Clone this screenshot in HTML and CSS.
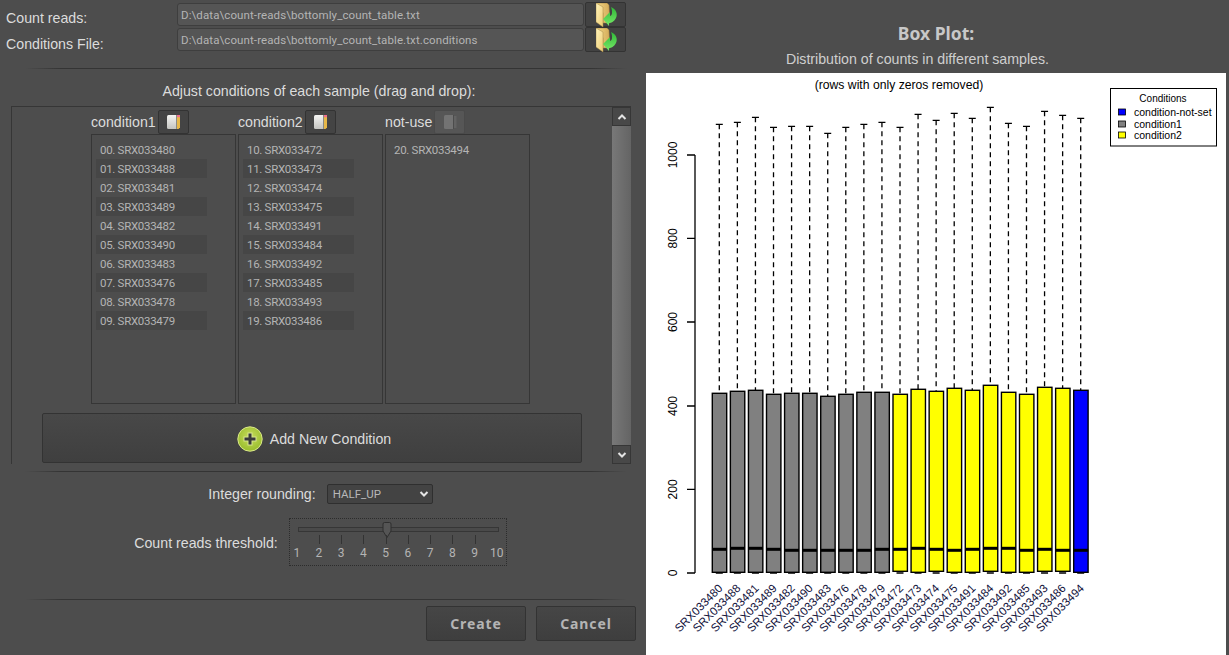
FILE: index.html
```html
<!DOCTYPE html>
<html lang="en">
<head>
  <meta charset="UTF-8">
  <title>Create Dataset</title>
  <link rel="stylesheet" href="styles.css">
</head>
<body>

  <svg class="icon-defs" width="0" height="0">
    <defs>
      <linearGradient id="folder-fill" x1="0" y1="0" x2="1" y2="0">
        <stop offset="0" stop-color="#f6da88"/>
        <stop offset="1" stop-color="#d2aa58"/>
      </linearGradient>
      <linearGradient id="flap-fill" x1="0" y1="0" x2="1" y2="1">
        <stop offset="0" stop-color="#fff4bc"/>
        <stop offset="1" stop-color="#eecb72"/>
      </linearGradient>
      <linearGradient id="arrow-fill" x1="0" y1="0" x2="0" y2="1">
        <stop offset="0" stop-color="#2fb838"/>
        <stop offset="1" stop-color="#78e868"/>
      </linearGradient>
      <linearGradient id="page-fill" x1="0" y1="0" x2="0" y2="1">
        <stop offset="0" stop-color="#f4f4f2"/>
        <stop offset="1" stop-color="#c4c4c0"/>
      </linearGradient>
      <radialGradient id="plus-fill" cx="0.5" cy="0.4" r="0.6">
        <stop offset="0" stop-color="#c8dc5c"/>
        <stop offset="1" stop-color="#98bc2c"/>
      </radialGradient>
      <symbol id="icon-folder" viewBox="0 0 24 24">
        <path d="M0 0 L11 0 L13 2 L14 20 L7 20 L7 10 Z" fill="url(#folder-fill)" stroke="#96783a" stroke-width="0.5"/>
        <path d="M0 0 L7 4 L7 24 L0 19 Z" fill="url(#flap-fill)" stroke="#a58a48" stroke-width="0.5"/>
        <path d="M15 4 C20 6 22 11 20 15 C18 19 15 20 13 20 L13 23 L7 16 L14 9 L14 13 C16 13 17 9 15 4 Z" fill="url(#arrow-fill)"/>
      </symbol>
      <symbol id="icon-note" viewBox="0 0 13 14">
        <path d="M1.5 0 H9 V14 H1.5 Q0 14 0 12.5 V1.5 Q0 0 1.5 0 Z" fill="url(#page-fill)"/>
        <rect x="9" y="0" width="1" height="14" fill="#8a8a84"/>
        <path d="M10 2 H13 V12.5 L11.5 14 H10 Z" fill="#e8b848"/>
        <rect x="10" y="0" width="3" height="2.2" fill="#f0708c"/>
      </symbol>
      <symbol id="icon-note-off" viewBox="0 0 13 14">
        <path d="M1.5 0 H9 V14 H1.5 Q0 14 0 12.5 V1.5 Q0 0 1.5 0 Z" fill="#737373"/>
        <rect x="9" y="0" width="1" height="14" fill="#4c4c4c"/>
        <rect x="10" y="1" width="2.5" height="12" fill="#636363"/>
      </symbol>
      <symbol id="icon-chevron" viewBox="0 0 10 8">
        <path d="M1.5 2 L5 5.5 L8.5 2" fill="none" stroke="#e4e4e4" stroke-width="2"/>
      </symbol>
    </defs>
  </svg>

  <main class="form">
    <div class="file-rows">
      <div class="file-row">
        <label class="file-label">Count reads:</label>
        <input class="file-input" type="text" readonly value="D:\data\count-reads\bottomly_count_table.txt">
        <button class="file-btn"><svg class="folder"><use href="#icon-folder"/></svg></button>
      </div>
      <div class="file-row">
        <label class="file-label">Conditions File:</label>
        <input class="file-input" type="text" readonly value="D:\data\count-reads\bottomly_count_table.txt.conditions">
        <button class="file-btn"><svg class="folder"><use href="#icon-folder"/></svg></button>
      </div>
    </div>

    <hr class="sep sep-top">
    <p class="adjust-title">Adjust conditions of each sample (drag and drop):</p>

    <section class="cond-pane">
      <div class="cond-body">
        <div class="cond-cols">
          <div class="cond-col">
            <div class="cond-head">
              <span class="cond-name">condition1</span>
              <button class="note-btn"><svg class="note"><use href="#icon-note"/></svg></button>
            </div>
            <ul class="sample-list">
              <li>00. SRX033480</li>
              <li>01. SRX033488</li>
              <li>02. SRX033481</li>
              <li>03. SRX033489</li>
              <li>04. SRX033482</li>
              <li>05. SRX033490</li>
              <li>06. SRX033483</li>
              <li>07. SRX033476</li>
              <li>08. SRX033478</li>
              <li>09. SRX033479</li>
            </ul>
          </div>
          <div class="cond-col">
            <div class="cond-head">
              <span class="cond-name">condition2</span>
              <button class="note-btn"><svg class="note"><use href="#icon-note"/></svg></button>
            </div>
            <ul class="sample-list">
              <li>10. SRX033472</li>
              <li>11. SRX033473</li>
              <li>12. SRX033474</li>
              <li>13. SRX033475</li>
              <li>14. SRX033491</li>
              <li>15. SRX033484</li>
              <li>16. SRX033492</li>
              <li>17. SRX033485</li>
              <li>18. SRX033493</li>
              <li>19. SRX033486</li>
            </ul>
          </div>
          <div class="cond-col">
            <div class="cond-head">
              <span class="cond-name">not-use</span>
              <button class="note-btn note-btn-off"><svg class="note"><use href="#icon-note-off"/></svg></button>
            </div>
            <ul class="sample-list">
              <li>20. SRX033494</li>
            </ul>
          </div>
        </div>
        <button class="add-btn">
          <svg class="plus" viewBox="0 0 26 26">
            <circle cx="13" cy="13" r="12.2" fill="url(#plus-fill)" stroke="#dbe88a" stroke-width="1"/>
            <path d="M10.5 6.5 H15.5 V10.5 H19.5 V15.5 H15.5 V19.5 H10.5 V15.5 H6.5 V10.5 H10.5 Z" fill="#d8e690"/>
            <path d="M11.5 7.5 H14.5 V11.5 H18.5 V14.5 H14.5 V18.5 H11.5 V14.5 H7.5 V11.5 H11.5 Z" fill="#3a3a3a"/>
          </svg>
          Add New Condition
        </button>
      </div>
      <div class="scrollbar">
        <div class="scroll-arrow"><svg class="chevron chevron-up"><use href="#icon-chevron"/></svg></div>
        <div class="scroll-thumb"></div>
        <div class="scroll-arrow"><svg class="chevron"><use href="#icon-chevron"/></svg></div>
      </div>
    </section>

    <hr class="sep sep-mid">

    <div class="opt-row opt-rounding">
      <label>Integer rounding:</label>
      <div class="select-wrap">
        <select class="round-select">
          <option>HALF_UP</option>
          <option>HALF_DOWN</option>
          <option>CEILING</option>
          <option>FLOOR</option>
        </select>
        <svg class="chevron select-arrow"><use href="#icon-chevron"/></svg>
      </div>
    </div>

    <div class="opt-row opt-threshold">
      <label class="threshold-label">Count reads threshold:</label>
      <div class="slider">
        <div class="slider-track"></div>
        <svg class="slider-thumb" viewBox="0 0 10 16">
          <path d="M1 2 Q1 .5 2.5 .5 H7.5 Q9 .5 9 2 V9 L5 15.5 L1 9 Z" fill="#555" stroke="#2f2f2f"/>
        </svg>
        <div class="slider-scale">
          <span class="mark mark-end">1</span>
          <span class="mark">2</span>
          <span class="mark">3</span>
          <span class="mark">4</span>
          <span class="mark">5</span>
          <span class="mark">6</span>
          <span class="mark">7</span>
          <span class="mark">8</span>
          <span class="mark">9</span>
          <span class="mark mark-end">10</span>
        </div>
      </div>
    </div>

    <hr class="sep sep-bottom">

    <div class="actions">
      <button class="action-btn">Create</button>
      <button class="action-btn">Cancel</button>
    </div>
  </main>

  <aside class="preview">
    <h2 class="preview-title">Box Plot:</h2>
    <p class="preview-sub">Distribution of counts in different samples.</p>
    <svg class="plot" id="plot" viewBox="646 73 580 582"></svg>
  </aside>

  <script src="plot.js"></script>
</body>
</html>
```

FILE: styles.css
```css
* {
  box-sizing: border-box;
}

html, body {
  margin: 0;
  padding: 0;
}

body {
  width: 1229px;
  height: 655px;
  overflow: hidden;
  display: flex;
  background-color: #4d4d4d;
  color: #dcdcdc;
  font-family: "Liberation Sans", Arial, sans-serif;
  font-size: 14.2px;
}

.icon-defs {
  position: absolute;
}

button {
  padding: 0;
  font-family: inherit;
  color: inherit;
}

/* left side */
.form {
  width: 640px;
  flex: none;
}

.file-rows {
  padding-top: 2px;
}

.file-row {
  display: flex;
  align-items: center;
  height: 25px;
}

.file-label {
  width: 177px;
  padding-left: 6px;
  padding-top: 7px;
}

.file-row + .file-row .file-label {
  padding-top: 9px;
}

.file-input {
  width: 407px;
  height: 23px;
  margin-right: 1px;
  padding: 0 3px;
  border: 1px solid #3e3e3e;
  border-radius: 3px;
  background-color: #555555;
  color: #b4b4b4;
  font-family: Roboto, sans-serif;
  font-size: 11.5px;
  letter-spacing: 0.1px;
}

.file-btn {
  width: 41px;
  height: 25px;
  display: flex;
  align-items: center;
  padding-left: 10px;
  border: 1px solid #333;
  border-radius: 2px;
  background-color: #424242;
}

.folder {
  width: 24px;
  height: 24px;
}

.sep {
  height: 1px;
  margin: 0 13px 0 25px;
  border: none;
  background: linear-gradient(to right, #4d4d4d, #343434 6%, #343434 94%, #4d4d4d);
}

.sep-top {
  margin-top: 16px;
}

.sep-mid {
  margin-top: 7px;
}

.sep-bottom {
  margin-top: 33px;
}

.adjust-title {
  margin: 0;
  width: 638px;
  height: 37px;
  line-height: 44px;
  text-align: center;
}

/* sample panel */
.cond-pane {
  display: flex;
  width: 620px;
  height: 358px;
  margin-left: 11px;
  border-top: 1px solid #363636;
  border-left: 1px solid #363636;
  overflow: hidden;
}

.cond-body {
  flex: 1;
}

.cond-cols {
  display: flex;
  gap: 2px;
  padding-left: 79px;
}

.cond-col {
  width: 145px;
}

.cond-head {
  display: flex;
  align-items: flex-end;
  gap: 2px;
  height: 27px;
}

.cond-name {
  font-size: 14.2px;
  line-height: 29px;
  height: 26px;
}

.note-btn {
  width: 31px;
  height: 24px;
  display: flex;
  justify-content: center;
  align-items: center;
  padding-left: 1px;
  border: 1px solid #333;
  border-radius: 2px;
  background-color: #444444;
}

.note-btn-off {
  border-color: #4a4a4a;
  background-color: #565656;
}

.note {
  width: 13px;
  height: 14px;
}

.sample-list {
  height: 270px;
  margin: 0;
  padding: 5px 0 0 4px;
  border: 1px solid #363636;
  list-style: none;
  font-family: Roboto, sans-serif;
  font-size: 11.5px;
  letter-spacing: -0.3px;
  color: #b4b4b4;
}

.sample-list li {
  width: 111px;
  height: 19px;
  line-height: 21px;
  padding-left: 4px;
}

.sample-list li:nth-child(even) {
  background-color: #464646;
}

.add-btn {
  width: 540px;
  height: 50px;
  margin: 9px 0 0 30px;
  padding: 1px 0 0 4px;
  display: flex;
  justify-content: center;
  align-items: center;
  gap: 7px;
  border: 1px solid #333;
  border-radius: 2px;
  background: linear-gradient(#484848, #3f3f3f);
  font-size: 14.2px;
  color: #dcdcdc;
}

.plus {
  width: 26px;
  height: 26px;
}

.scrollbar {
  width: 19px;
  flex: none;
  display: flex;
  flex-direction: column;
}

.scroll-arrow {
  height: 19px;
  flex: none;
  display: flex;
  justify-content: center;
  align-items: center;
  background-color: #484848;
  border: 1px solid #363636;
}

.scroll-thumb {
  flex: 1;
  background: linear-gradient(to right, #787878, #646464);
}

.chevron {
  width: 10px;
  height: 8px;
}

.chevron-up {
  transform: rotate(180deg);
}

/* options */
.opt-row {
  display: flex;
  justify-content: center;
  align-items: center;
  gap: 11px;
  width: 641px;
}

.opt-rounding {
  margin-top: 12px;
}

.opt-threshold {
  margin-top: 14px;
}

.threshold-label {
  padding-top: 2px;
}

.select-wrap {
  position: relative;
  width: 106px;
  height: 20px;
}

.round-select {
  appearance: none;
  width: 100%;
  height: 100%;
  padding: 0 5px;
  border: 1px solid #2f2f2f;
  border-radius: 2px;
  background-color: #434343;
  color: #b8b8b8;
  font-family: Roboto, sans-serif;
  font-size: 11.5px;
}

.select-arrow {
  position: absolute;
  right: 4px;
  top: 6px;
}

.slider {
  position: relative;
  width: 218px;
  height: 48px;
  border: 1px dotted #2c2c2c;
  padding: 8px 2px 0 0;
}

.slider-track {
  height: 5px;
  margin-left: 8px;
  margin-right: 5px;
  border: 1px solid #363636;
  background-color: #4a4a4a;
}

.slider-thumb {
  position: absolute;
  left: 92px;
  top: 3px;
  width: 10px;
  height: 16px;
}

.slider-scale {
  display: flex;
  justify-content: space-between;
  margin-top: 3px;
}

.mark {
  width: 14px;
  padding-top: 11px;
  text-align: center;
  position: relative;
  font-family: Roboto, sans-serif;
  font-size: 12px;
  line-height: 15px;
  color: #b4b4b4;
}

.mark::before {
  content: "";
  position: absolute;
  left: 7px;
  top: 0;
  width: 1px;
  height: 9px;
  background-color: #333;
}

.mark-end::before {
  display: none;
}

.actions {
  display: flex;
  justify-content: flex-end;
  gap: 10px;
  margin-top: 6px;
  padding-right: 4px;
}

.action-btn {
  width: 100px;
  height: 35px;
  border: 1px solid #333;
  border-radius: 2px;
  background: linear-gradient(#464646, #3e3e3e);
  font-family: "Noto Sans", sans-serif;
  font-size: 14px;
  font-weight: 700;
  letter-spacing: 0.9px;
  color: #b4b4b4;
}

/* right side */
.preview {
  flex: 1;
  padding-left: 6px;
}

.preview-title {
  margin: 0;
  width: 580px;
  height: 44px;
  padding-top: 22px;
  text-align: center;
  font-family: "Noto Sans", sans-serif;
  font-size: 17.5px;
  line-height: 22px;
  color: #c8c8c8;
}

.preview-sub {
  margin: 0;
  width: 543px;
  height: 29px;
  line-height: 30px;
  text-align: center;
  color: #cfcfcf;
}

.plot {
  display: block;
  width: 580px;
  height: 582px;
  background-color: #ffffff;
  font-family: "Liberation Sans", Arial, sans-serif;
}
```

FILE: plot.js
```js
// sample, group, box top, box bottom, median, whisker top (all in screen y)
const samples = [
  ['SRX033480', 'c1', 393.3, 572.3, 549.3, 124.3],
  ['SRX033488', 'c1', 391.3, 572.3, 548.3, 122.3],
  ['SRX033481', 'c1', 390.3, 572.3, 548.3, 117.3],
  ['SRX033489', 'c1', 394.3, 572.3, 549.3, 127.3],
  ['SRX033482', 'c1', 393.3, 572.3, 550.3, 126.3],
  ['SRX033490', 'c1', 393.3, 572.3, 550.3, 126.3],
  ['SRX033483', 'c1', 396.3, 572.3, 550.3, 133.3],
  ['SRX033476', 'c1', 394.3, 572.3, 550.3, 127.3],
  ['SRX033478', 'c1', 392.3, 572.3, 550.3, 124.3],
  ['SRX033479', 'c1', 392.3, 572.3, 549.3, 122.3],
  ['SRX033472', 'c2', 394.3, 571.3, 549.3, 127.3],
  ['SRX033473', 'c2', 389.3, 572.3, 548.3, 114.3],
  ['SRX033474', 'c2', 391.3, 571.3, 549.3, 120.3],
  ['SRX033475', 'c2', 388.3, 572.3, 550.3, 113.3],
  ['SRX033491', 'c2', 390.3, 572.3, 549.3, 118.3],
  ['SRX033484', 'c2', 385.3, 571.3, 548.3, 107.3],
  ['SRX033492', 'c2', 392.3, 572.3, 548.3, 123.3],
  ['SRX033485', 'c2', 394.3, 572.3, 550.3, 126.3],
  ['SRX033493', 'c2', 387.3, 571.3, 549.3, 111.3],
  ['SRX033486', 'c2', 388.3, 571.3, 550.3, 115.3],
  ['SRX033494', 'none', 390.3, 572.3, 550.3, 118.3]
];

const colors = { c1: '#808080', c2: '#ffff00', none: '#0000ff' };
let out = '';

// y axis
out += '<path d="M695 155 V573 M687 573 H695 M687 489.4 H695 M687 406 H695 M687 322 H695 M687 238.4 H695 M687 155 H695" stroke="#000" stroke-width="1.3" fill="none"/>';
[[0, 573], [200, 489.4], [400, 406], [600, 322], [800, 238.4], [1000, 155]].forEach(([v, y]) => {
  out += `<text x="677" y="${y}" transform="rotate(-90 677 ${y})" text-anchor="middle" font-size="12">${v}</text>`;
});

out += '<text x="899" y="89" text-anchor="middle" font-size="12.2">(rows with only zeros removed)</text>';

samples.forEach((s, i) => {
  const x = 719.3 + i * 18.07;
  const [name, group, top, bottom, median, whisker] = s;
  out += `<path d="M${x} ${whisker} V${top}" stroke="#000" stroke-width="1.3" stroke-dasharray="5 4" fill="none"/>`;
  out += `<path d="M${x - 3.5} ${whisker} H${x + 3.5} M${x - 3.5} 573 H${x + 3.5}" stroke="#000" stroke-width="1.3" fill="none"/>`;
  out += `<rect x="${x - 7}" y="${top}" width="14.4" height="${bottom - top}" fill="${colors[group]}" stroke="#000" stroke-width="1.4"/>`;
  out += `<rect x="${x - 7}" y="${median - 1.5}" width="14.4" height="3" fill="#000"/>`;
  out += `<text x="${x + 4}" y="589" transform="rotate(-45 ${x + 4} 589)" text-anchor="end" font-size="11.5" fill="#10103a">${name}</text>`;
});

// legend
out += '<rect x="1110.5" y="88.5" width="106" height="57.5" fill="#fff" stroke="#000" stroke-width="1"/>';
out += '<text x="1163" y="101.5" text-anchor="middle" font-size="10">Conditions</text>';
[['condition-not-set', '#0000ff', 112], ['condition1', '#808080', 124], ['condition2', '#ffff00', 135]].forEach(([label, color, y]) => {
  out += `<rect x="1118.5" y="${y - 3}" width="7" height="6" fill="${color}" stroke="#000" stroke-width="0.8"/>`;
  out += `<text x="1134" y="${y + 3.5}" font-size="10.5">${label}</text>`;
});

document.getElementById('plot').innerHTML = out;
```
